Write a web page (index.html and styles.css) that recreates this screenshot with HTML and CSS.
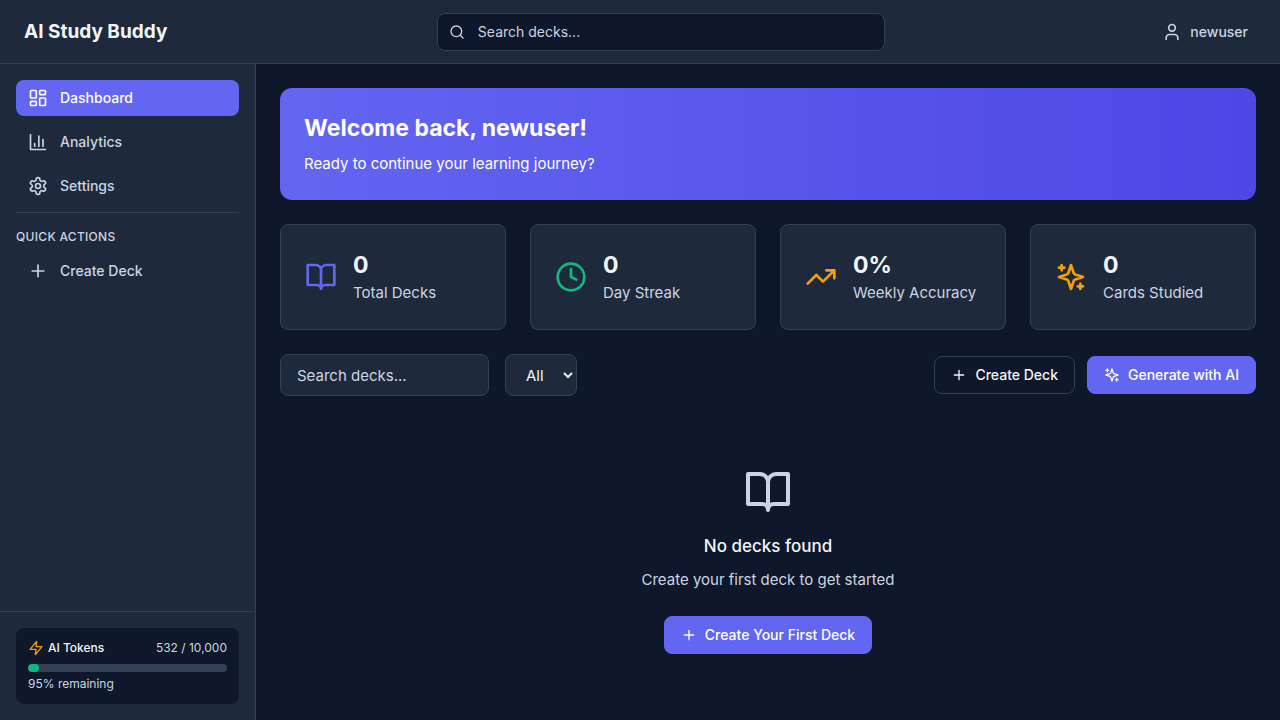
FILE: index.html
```html
<!DOCTYPE html>
<html lang="en">
<head>
<meta charset="utf-8">
<meta name="viewport" content="width=device-width, initial-scale=1">
<title>AI Study Buddy</title>
<link rel="stylesheet" href="styles.css">
</head>
<body>
<svg class="sprite" aria-hidden="true">
  <symbol id="dashboard" viewBox="0 0 24 24"><rect width="7" height="9" x="3" y="3" rx="1"/><rect width="7" height="5" x="14" y="3" rx="1"/><rect width="7" height="9" x="14" y="12" rx="1"/><rect width="7" height="5" x="3" y="16" rx="1"/></symbol>
  <symbol id="chart" viewBox="0 0 24 24"><path d="M3 3v18h18M18 17V9M13 17V5M8 17v-3"/></symbol>
  <symbol id="settings" viewBox="0 0 24 24"><path d="M12.22 2h-.44a2 2 0 0 0-2 2v.18a2 2 0 0 1-1 1.73l-.43.25a2 2 0 0 1-2 0l-.15-.08a2 2 0 0 0-2.73.73l-.22.38a2 2 0 0 0 .73 2.73l.15.1a2 2 0 0 1 1 1.72v.51a2 2 0 0 1-1 1.74l-.15.09a2 2 0 0 0-.73 2.73l.22.38a2 2 0 0 0 2.73.73l.15-.08a2 2 0 0 1 2 0l.43.25a2 2 0 0 1 1 1.73V20a2 2 0 0 0 2 2h.44a2 2 0 0 0 2-2v-.18a2 2 0 0 1 1-1.73l.43-.25a2 2 0 0 1 2 0l.15.08a2 2 0 0 0 2.73-.73l.22-.39a2 2 0 0 0-.73-2.73l-.15-.08a2 2 0 0 1-1-1.74v-.5a2 2 0 0 1 1-1.74l.15-.09a2 2 0 0 0 .73-2.73l-.22-.38a2 2 0 0 0-2.73-.73l-.15.08a2 2 0 0 1-2 0l-.43-.25a2 2 0 0 1-1-1.73V4a2 2 0 0 0-2-2z"/><circle cx="12" cy="12" r="3"/></symbol>
  <symbol id="plus" viewBox="0 0 24 24"><path d="M5 12h14M12 5v14"/></symbol>
  <symbol id="zap" viewBox="0 0 24 24"><polygon points="13 2 3 14 12 14 11 22 21 10 12 10 13 2"/></symbol>
  <symbol id="search" viewBox="0 0 24 24"><circle cx="11" cy="11" r="8"/><path d="m21 21-4.3-4.3"/></symbol>
  <symbol id="user" viewBox="0 0 24 24"><path d="M19 21v-2a4 4 0 0 0-4-4H9a4 4 0 0 0-4 4v2"/><circle cx="12" cy="7" r="4"/></symbol>
  <symbol id="book" viewBox="0 0 24 24"><path d="M2 3h6a4 4 0 0 1 4 4v14a3 3 0 0 0-3-3H2zM22 3h-6a4 4 0 0 0-4 4v14a3 3 0 0 1 3-3h7z"/></symbol>
  <symbol id="clock" viewBox="0 0 24 24"><circle cx="12" cy="12" r="10"/><path d="M12 6v6l4 2"/></symbol>
  <symbol id="trend" viewBox="0 0 24 24"><path d="M22 7l-8.500 8.500-5-5L2 17M16 7h6v6"/></symbol>
  <symbol id="sparkles" viewBox="0 0 24 24"><path d="m12 3-1.912 5.813a2 2 0 0 1-1.275 1.275L3 12l5.813 1.912a2 2 0 0 1 1.275 1.275L12 21l1.912-5.813a2 2 0 0 1 1.275-1.275L21 12l-5.813-1.912a2 2 0 0 1-1.275-1.275L12 3ZM5 3v4M19 17v4M3 5h4M17 19h4"/></symbol>
</svg>
<div class="app">
  <header class="header">
    <div class="brand">AI Study Buddy</div>
    <label class="search">
      <svg class="icon icon-sm search-icon" aria-hidden="true"><use href="#search"/></svg>
      <input class="search-input" type="search" placeholder="Search decks..." aria-label="Search decks">
    </label>
    <button class="user" type="button"><svg class="icon icon-md" aria-hidden="true"><use href="#user"/></svg>newuser</button>
  </header>
  <div class="body">
    <aside class="sidebar">
      <nav class="nav">
        <a class="nav-item active" href="#" aria-current="page"><svg class="icon icon-md" aria-hidden="true"><use href="#dashboard"/></svg>Dashboard</a>
        <a class="nav-item" href="#"><svg class="icon icon-md" aria-hidden="true"><use href="#chart"/></svg>Analytics</a>
        <a class="nav-item" href="#"><svg class="icon icon-md" aria-hidden="true"><use href="#settings"/></svg>Settings</a>
        <div class="quick">
          <h2 class="quick-title">QUICK ACTIONS</h2>
          <button class="nav-item" type="button"><svg class="icon icon-md" aria-hidden="true"><use href="#plus"/></svg>Create Deck</button>
        </div>
      </nav>
      <div class="sidebar-footer">
        <div class="tokens">
          <div class="tokens-row">
            <span class="tokens-name"><svg class="icon icon-sm amber" aria-hidden="true"><use href="#zap"/></svg>AI Tokens</span>
            <span>532 / 10,000</span>
          </div>
          <div class="bar"><div class="bar-fill" style="width: 5.32%"></div></div>
          <div class="tokens-left">95% remaining</div>
        </div>
      </div>
    </aside>
    <main class="main">
      <section class="banner">
        <h1 class="banner-title">Welcome back, newuser!</h1>
        <p class="banner-text">Ready to continue your learning journey?</p>
      </section>
      <section class="stats">
        <div class="stat"><svg class="icon icon-lg indigo" aria-hidden="true"><use href="#book"/></svg><div><div class="stat-value">0</div><div class="stat-label">Total Decks</div></div></div>
        <div class="stat"><svg class="icon icon-lg green" aria-hidden="true"><use href="#clock"/></svg><div><div class="stat-value">0</div><div class="stat-label">Day Streak</div></div></div>
        <div class="stat"><svg class="icon icon-lg amber" aria-hidden="true"><use href="#trend"/></svg><div><div class="stat-value">0%</div><div class="stat-label">Weekly Accuracy</div></div></div>
        <div class="stat"><svg class="icon icon-lg amber" aria-hidden="true"><use href="#sparkles"/></svg><div><div class="stat-value">0</div><div class="stat-label">Cards Studied</div></div></div>
      </section>
      <section class="toolbar">
        <div class="filters">
          <input class="field filter-input" type="text" placeholder="Search decks..." aria-label="Filter decks">
          <select class="field filter-select" aria-label="Deck category"><option>All</option></select>
        </div>
        <div class="actions">
          <button class="btn btn-outline" type="button"><svg class="icon icon-sm" aria-hidden="true"><use href="#plus"/></svg>Create Deck</button>
          <button class="btn btn-primary" type="button"><svg class="icon icon-sm" aria-hidden="true"><use href="#sparkles"/></svg>Generate with AI</button>
        </div>
      </section>
      <section class="empty">
        <svg class="icon icon-xl" aria-hidden="true"><use href="#book"/></svg>
        <h2 class="empty-title">No decks found</h2>
        <p class="empty-text">Create your first deck to get started</p>
        <button class="btn btn-primary" type="button"><svg class="icon icon-sm" aria-hidden="true"><use href="#plus"/></svg>Create Your First Deck</button>
      </section>
    </main>
  </div>
</div>
</body>
</html>
```
FILE: styles.css
```css
:root {
  --bg: #0f172a;
  --surface: #1e293b;
  --border: #334155;
  --text: #f1f5f9;
  --muted: #cbd5e1;
  --primary: #6366f1;
}

* { box-sizing: border-box; margin: 0; padding: 0; }

body {
  background: var(--bg);
  color: var(--text);
  font: 400 15px/24px Inter, sans-serif;
}

button, input, select { font: inherit; color: inherit; }
button { background: none; border: 0; cursor: pointer; }
a { color: inherit; text-decoration: none; }

.sprite { display: none; }

.icon {
  flex: none;
  fill: none;
  stroke: currentColor;
  stroke-width: 2;
  stroke-linecap: round;
  stroke-linejoin: round;
}
.icon-sm { width: 16px; height: 16px; }
.icon-md { width: 20px; height: 20px; }
.icon-lg { width: 32px; height: 32px; }
.icon-xl { width: 48px; height: 48px; }
.indigo { color: var(--primary); }
.green { color: #10b981; }
.amber { color: #f59e0b; }

.app { display: flex; flex-direction: column; min-height: 100vh; }

.header {
  display: flex;
  align-items: center;
  justify-content: space-between;
  height: 64px;
  padding: 0 24px;
  background: var(--surface);
  border-bottom: 1px solid var(--border);
}
.brand { font-size: 19px; line-height: 28px; font-weight: 700; }

.search { position: relative; flex: 0 1 448px; }
.search-icon { position: absolute; left: 12px; top: 11px; color: var(--muted); }
.search-input {
  display: block;
  width: 100%;
  padding: 8px 16px 8px 40px;
  background: var(--bg);
  border: 1px solid var(--border);
  border-radius: 8px;
  font-size: 14px;
  line-height: 20px;
}
::placeholder { color: var(--muted); opacity: 1; }

.user {
  display: flex;
  align-items: center;
  gap: 8px;
  padding: 8px;
  color: var(--muted);
  font-size: 14px;
  line-height: 20px;
  font-weight: 500;
}

.body { display: flex; flex: 1; }

.sidebar {
  display: flex;
  flex-direction: column;
  flex: none;
  width: 256px;
  background: var(--surface);
  border-right: 1px solid var(--border);
}
.nav { display: flex; flex-direction: column; flex: 1; gap: 8px; padding: 16px; }
.nav-item {
  display: flex;
  align-items: center;
  gap: 12px;
  width: 100%;
  padding: 8px 12px;
  border-radius: 8px;
  color: var(--muted);
  font-size: 14px;
  line-height: 20px;
  font-weight: 500;
}
.nav-item.active { background: var(--primary); color: #fff; }
.quick { padding-top: 16px; border-top: 1px solid var(--border); }
.quick-title {
  margin-bottom: 8px;
  color: var(--muted);
  font-size: 12px;
  line-height: 16px;
  font-weight: 500;
  letter-spacing: 0.025em;
}

.sidebar-footer { padding: 16px; border-top: 1px solid var(--border); }
.tokens {
  padding: 12px;
  background: var(--bg);
  border-radius: 8px;
  color: var(--muted);
  font-size: 12px;
  line-height: 16px;
}
.tokens-row { display: flex; justify-content: space-between; margin-bottom: 8px; }
.tokens-name { display: flex; gap: 4px; color: var(--text); font-weight: 500; }
.bar { height: 8px; margin-bottom: 4px; overflow: hidden; background: var(--border); border-radius: 4px; }
.bar-fill { height: 100%; background: #10b981; border-radius: 4px; }

.main { flex: 1; display: flex; flex-direction: column; gap: 24px; min-width: 0; padding: 24px; }

.banner {
  padding: 24px;
  background: linear-gradient(90deg, var(--primary), #4f46e5);
  border-radius: 12px;
  color: #fff;
}
.banner-title { margin-bottom: 8px; font-size: 23px; line-height: 32px; font-weight: 700; }

.stats { display: grid; grid-template-columns: repeat(4, minmax(0, 1fr)); gap: 24px; }
.stat {
  display: flex;
  align-items: center;
  gap: 16px;
  padding: 24px;
  background: var(--surface);
  border: 1px solid var(--border);
  border-radius: 8px;
}
.stat-value { font-size: 23px; line-height: 32px; font-weight: 700; }
.stat-label { color: var(--muted); white-space: nowrap; }

.toolbar, .filters, .actions { display: flex; align-items: center; }
.toolbar { justify-content: space-between; }
.filters { gap: 16px; }
.actions { gap: 12px; }
.field {
  height: 42px;
  padding: 8px 16px;
  background: var(--surface);
  border: 1px solid var(--border);
  border-radius: 8px;
}
.filter-input { width: 209px; }
.filter-select { width: 72px; padding-right: 0; }

.btn {
  display: flex;
  align-items: center;
  gap: 8px;
  padding: 8px 16px;
  border: 1px solid var(--border);
  border-radius: 8px;
  font-size: 14px;
  line-height: 20px;
  font-weight: 500;
}
.btn-primary { background: var(--primary); border-color: var(--primary); color: #fff; }

.empty {
  display: flex;
  flex-direction: column;
  align-items: center;
  padding: 48px 0 24px;
  color: var(--muted);
}
.empty-title { margin: 16px 0 8px; color: var(--text); font-size: 17px; line-height: 28px; font-weight: 500; }
.empty-text { margin-bottom: 24px; }
```
